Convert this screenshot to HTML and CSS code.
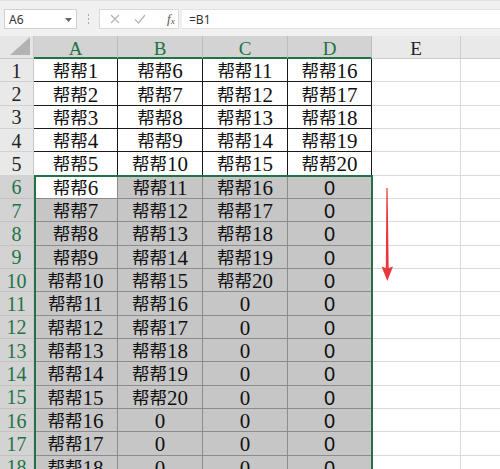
FILE: index.html
```html
<!DOCTYPE html>
<html lang="zh">
<head>
<meta charset="utf-8">
<title>Sheet</title>
<link rel="stylesheet" href="styles.css">
</head>
<body>
<div class="app">
  <div class="fbar">
    <div class="namebox"><span class="nb-text">A6</span><svg class="caret" width="7" height="4" viewBox="0 0 7 4"><path d="M0 0H7L3.5 4Z" fill="#666"/></svg></div>
    <div class="dots"><i></i><i></i><i></i></div>
    <div class="fbtns">
      <svg width="10" height="10" viewBox="0 0 10 10"><path d="M1 1L9 9M9 1L1 9" stroke="#b5b5b5" stroke-width="1.2" fill="none"/></svg>
      <svg width="12" height="10" viewBox="0 0 12 10"><path d="M1 5.5L4.5 9L11 1" stroke="#b5b5b5" stroke-width="1.2" fill="none"/></svg>
      <span class="fx">f<sub>x</sub></span>
    </div>
    <div class="finput">=B1</div>
  </div>
  <div class="sheet">
    <div class="corner"><svg width="20" height="18" viewBox="0 0 20 18"><path d="M20 0V18H0Z" fill="#b3b3b3"/></svg></div>
    <div class="ch sel">A</div><div class="ch sel">B</div><div class="ch sel">C</div><div class="ch sel">D</div><div class="ch">E</div><div class="ch"></div>

    <div class="rh">1</div><div class="c b">帮帮<span class="n">1</span></div><div class="c b">帮帮<span class="n">6</span></div><div class="c b">帮帮<span class="n">11</span></div><div class="c b">帮帮<span class="n">16</span></div><div class="c e"></div><div class="c e"></div>
    <div class="rh">2</div><div class="c b">帮帮<span class="n">2</span></div><div class="c b">帮帮<span class="n">7</span></div><div class="c b">帮帮<span class="n">12</span></div><div class="c b">帮帮<span class="n">17</span></div><div class="c e"></div><div class="c e"></div>
    <div class="rh">3</div><div class="c b">帮帮<span class="n">3</span></div><div class="c b">帮帮<span class="n">8</span></div><div class="c b">帮帮<span class="n">13</span></div><div class="c b">帮帮<span class="n">18</span></div><div class="c e"></div><div class="c e"></div>
    <div class="rh">4</div><div class="c b">帮帮<span class="n">4</span></div><div class="c b">帮帮<span class="n">9</span></div><div class="c b">帮帮<span class="n">14</span></div><div class="c b">帮帮<span class="n">19</span></div><div class="c e"></div><div class="c e"></div>
    <div class="rh">5</div><div class="c b">帮帮<span class="n">5</span></div><div class="c b">帮帮<span class="n">10</span></div><div class="c b">帮帮<span class="n">15</span></div><div class="c b">帮帮<span class="n">20</span></div><div class="c e"></div><div class="c e"></div>

    <div class="rh sel">6</div><div class="c act">帮帮<span class="n">6</span></div><div class="c s">帮帮<span class="n">11</span></div><div class="c s">帮帮<span class="n">16</span></div><div class="c s z">0</div><div class="c e"></div><div class="c e"></div>
    <div class="rh sel">7</div><div class="c s">帮帮<span class="n">7</span></div><div class="c s">帮帮<span class="n">12</span></div><div class="c s">帮帮<span class="n">17</span></div><div class="c s z">0</div><div class="c e"></div><div class="c e"></div>
    <div class="rh sel">8</div><div class="c s">帮帮<span class="n">8</span></div><div class="c s">帮帮<span class="n">13</span></div><div class="c s">帮帮<span class="n">18</span></div><div class="c s z">0</div><div class="c e"></div><div class="c e"></div>
    <div class="rh sel">9</div><div class="c s">帮帮<span class="n">9</span></div><div class="c s">帮帮<span class="n">14</span></div><div class="c s">帮帮<span class="n">19</span></div><div class="c s z">0</div><div class="c e"></div><div class="c e"></div>
    <div class="rh sel">10</div><div class="c s">帮帮<span class="n">10</span></div><div class="c s">帮帮<span class="n">15</span></div><div class="c s">帮帮<span class="n">20</span></div><div class="c s z">0</div><div class="c e"></div><div class="c e"></div>
    <div class="rh sel">11</div><div class="c s">帮帮<span class="n">11</span></div><div class="c s">帮帮<span class="n">16</span></div><div class="c s"><span class="n">0</span></div><div class="c s z">0</div><div class="c e"></div><div class="c e"></div>
    <div class="rh sel">12</div><div class="c s">帮帮<span class="n">12</span></div><div class="c s">帮帮<span class="n">17</span></div><div class="c s"><span class="n">0</span></div><div class="c s z">0</div><div class="c e"></div><div class="c e"></div>
    <div class="rh sel">13</div><div class="c s">帮帮<span class="n">13</span></div><div class="c s">帮帮<span class="n">18</span></div><div class="c s"><span class="n">0</span></div><div class="c s z">0</div><div class="c e"></div><div class="c e"></div>
    <div class="rh sel">14</div><div class="c s">帮帮<span class="n">14</span></div><div class="c s">帮帮<span class="n">19</span></div><div class="c s"><span class="n">0</span></div><div class="c s z">0</div><div class="c e"></div><div class="c e"></div>
    <div class="rh sel">15</div><div class="c s">帮帮<span class="n">15</span></div><div class="c s">帮帮<span class="n">20</span></div><div class="c s"><span class="n">0</span></div><div class="c s z">0</div><div class="c e"></div><div class="c e"></div>
    <div class="rh sel">16</div><div class="c s">帮帮<span class="n">16</span></div><div class="c s"><span class="n">0</span></div><div class="c s"><span class="n">0</span></div><div class="c s z">0</div><div class="c e"></div><div class="c e"></div>
    <div class="rh sel">17</div><div class="c s">帮帮<span class="n">17</span></div><div class="c s"><span class="n">0</span></div><div class="c s"><span class="n">0</span></div><div class="c s z">0</div><div class="c e"></div><div class="c e"></div>
    <div class="rh sel">18</div><div class="c s">帮帮<span class="n">18</span></div><div class="c s"><span class="n">0</span></div><div class="c s"><span class="n">0</span></div><div class="c s z">0</div><div class="c e"></div><div class="c e"></div>

    <div class="selbox"></div>
    <svg class="arrow" width="16" height="98" viewBox="0 0 16 98"><path d="M6.4 2L7.6 2L8.7 82L13 80.5L7.3 95L1.6 80.5L5.8 82Z" fill="#e8383d"/></svg>
  </div>
</div>
</body>
</html>
```
FILE: styles.css
```css
* { box-sizing: border-box; }
html, body { margin: 0; padding: 0; }
body {
  width: 500px;
  height: 469px;
  overflow: hidden;
  background: #fff;
  font-family: "Liberation Serif", "Noto Sans CJK SC", serif;
}
.app { width: 500px; height: 469px; overflow: hidden; }

.fbar {
  height: 36px;
  background: #f0f0f0;
  display: flex;
  align-items: flex-start;
  padding: 8px 0 0 4px;
  border-top: 1px solid #e2e2e2;
}
.namebox {
  width: 73px;
  height: 20px;
  background: #fff;
  border: 1px solid #d0d0d0;
  display: flex;
  align-items: center;
  justify-content: space-between;
  padding: 0 4px 0 4px;
  font-family: "Noto Sans", "Liberation Sans", sans-serif;
  font-size: 12px;
  color: #333;
}
.caret { margin-top: 1px; }
.dots {
  width: 22px;
  height: 20px;
  display: flex;
  flex-direction: column;
  align-items: center;
  justify-content: center;
  gap: 2px;
}
.dots i { width: 1px; height: 2px; background: #a8a8a8; display: block; }
.fbtns {
  width: 80px;
  height: 20px;
  background: #fff;
  border: 1px solid #d9d9d9;
  display: flex;
  align-items: center;
  padding-left: 10px;
  gap: 14px;
}
.fx {
  font-family: "Liberation Serif", serif;
  font-style: italic;
  font-size: 13px;
  color: #555;
  margin-left: 7px;
  line-height: 1;
}
.fx sub { font-size: 9px; vertical-align: -1px; }
.finput {
  flex: 1;
  height: 20px;
  margin-left: 3px;
  background: #fff;
  border-top: 1px solid #e2e2e2;
  border-bottom: 1px solid #e2e2e2;
  font-family: "Noto Sans", "Liberation Sans", sans-serif;
  font-size: 12px;
  color: #333;
  padding: 1px 0 0 7px;
  line-height: 17px;
}

.sheet {
  position: relative;
  display: grid;
  grid-template-columns: 34px 84px 85px 85px 84px 89px 60px;
  grid-template-rows: 23px repeat(18, 23.33px);
}
.sheet > div {
  display: flex;
  align-items: center;
  justify-content: center;
  border-right: 1px solid #dadada;
  border-bottom: 1px solid #dadada;
}
.corner {
  background: #e6e6e6;
  border-right: 1px solid #c9c9c9 !important;
  border-bottom: 1px solid #c9c9c9 !important;
  align-items: flex-end !important;
  justify-content: flex-end !important;
  padding: 0 3px 3px 0;
}
.ch {
  background: #e9e9e9;
  border-right: 1px solid #cdcdcd !important;
  border-bottom: 1px solid #cdcdcd !important;
  font-size: 19px;
  color: #222;
  padding-top: 3px;
}
.ch.sel {
  background: #d3d3d3;
  color: #217346;
  border-right-color: #bcbcbc !important;
  border-bottom: 2px solid #217346 !important;
  padding-top: 4px;
}
.rh {
  background: #e9e9e9;
  border-right: 1px solid #c9c9c9 !important;
  border-bottom: 1px solid #d2d2d2 !important;
  font-size: 20px;
  color: #222;
  padding-top: 2px;
}
.rh.sel {
  background: #d3d3d3;
  color: #217346;
  border-bottom-color: #c2c2c2 !important;
}
.c {
  font-size: 17.5px;
  color: #111;
  padding-top: 2px;
  line-height: 22px;
}
.c .n {
  font-size: 21px;
  line-height: 22px;
  position: relative;
  top: 0px;
}
.c.b {
  border-right: 1px solid #1a1a1a !important;
  border-bottom: 1px solid #1a1a1a !important;
}
.c.s {
  background: #c6c6c6;
  border-right: 1px solid #8c8c8c !important;
  border-bottom: 1px solid #8c8c8c !important;
}
.c.act {
  background: #fff;
  border-right: 1px solid #8c8c8c !important;
  border-bottom: 1px solid #8c8c8c !important;
}
.c.z {
  font-family: "Liberation Sans", sans-serif;
  font-size: 20px;
}
.c.e {
  background: #fff;
}
.selbox {
  position: absolute;
  grid-column: 2 / 6;
  grid-row: 7 / 20;
  top: -1px;
  left: 0px;
  right: -1px;
  bottom: 0;
  border: 2px solid #217346 !important;
  pointer-events: none;
}
.arrow {
  position: absolute;
  left: 380px;
  top: 150px;
}
```
